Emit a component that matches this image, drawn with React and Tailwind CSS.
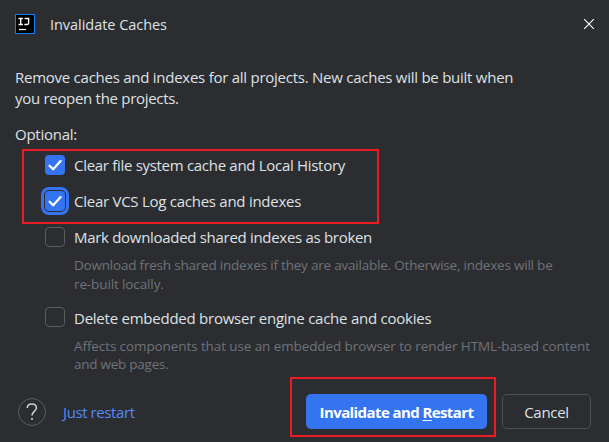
import React from "react";

function Check() {
  return (
    <svg width="20" height="20" viewBox="0 0 20 20" fill="none" className="block">
      <path d="M4.6 10.7 8.2 14.3 15.6 6.1" stroke="#fff" strokeWidth="2.3" strokeLinecap="round" strokeLinejoin="round" />
    </svg>
  );
}

function Checkbox({ checked, focused }) {
  return (
    <span
      className={
        "block size-5 shrink-0 rounded-[4px] " +
        (checked ? "bg-[#3574f0] " : "border-[1.5px] border-[#5a5d63] ") +
        (focused ? "outline-3 outline-offset-1 outline-[#3574f0]" : "")
      }
    >
      {checked && <Check />}
    </span>
  );
}

function Option({ label, spacing, checked, focused, offset = "" }) {
  return (
    <label className="flex h-5 gap-[9px]">
      <Checkbox checked={checked} focused={focused} />
      <span className={"leading-5 " + offset + " " + spacing}>{label}</span>
    </label>
  );
}

export default function App() {
  return (
    <div className="relative flex h-[442px] w-[609px] flex-col overflow-hidden bg-[#2b2d30] font-['Open_Sans','Noto_Sans',sans-serif] text-[15px] whitespace-nowrap text-[#dfe1e5]">
      <header className="flex h-12 items-center pr-[14px] pl-[15px]">
        <svg width="20" height="20" viewBox="0 0 20 20" className="block shrink-0">
          <rect x="0.5" y="0.5" width="19" height="19" fill="#000" stroke="#087cfa" />
          <path d="M3.5 4.5h4.4M5.7 4.5v6M3.5 10.5h4.4M9.6 4.5h4v4.4q0 1.6-1.6 1.6H9.3" stroke="#fff" strokeWidth="1.4" fill="none" />
          <path d="M4 15.5h7" stroke="#fff" strokeWidth="1.2" />
        </svg>
        <h1 className="ml-[15px] grow pt-px text-[14.5px] leading-5 tracking-[-0.04px]">Invalidate Caches</h1>
        <svg width="12" height="12" viewBox="0 0 12 12" className="block">
          <path d="M1.2 1.2 10.8 10.8M10.8 1.2 1.2 10.8" stroke="#fff" strokeWidth="1.1" />
        </svg>
      </header>

      <main className="px-[15px] pt-[19px]">
        <p className="leading-[21px]">
          <span className="tracking-[-0.255px]">Remove caches and indexes for all projects. New caches will be built when</span>
          <br />
          <span className="tracking-[-0.3px]">you reopen the projects.</span>
        </p>
        <p className="mt-[15px] leading-[21px] tracking-[-0.25px]">Optional:</p>
        <div className="mt-[10px] flex flex-col pl-[30px]">
          <Option label="Clear file system cache and Local History" spacing="tracking-[-0.3px]" checked />
          <div className="mt-4">
            <Option label="Clear VCS Log caches and indexes" spacing="tracking-[-0.26px]" checked focused />
          </div>
          <div className="mt-4">
            <Option label="Mark downloaded shared indexes as broken" spacing="tracking-[-0.3px]" />
          </div>
          <p className="mt-[9px] pl-[29px] text-[13.5px] leading-[19px] text-[#6f737a]">
            <span className="tracking-[-0.21px]">Download fresh shared indexes if they are available. Otherwise, indexes will be</span>
            <br />
            <span className="tracking-[-0.12px]">re-built locally.</span>
          </p>
          <div className="mt-[13px]">
            <Option label="Delete embedded browser engine cache and cookies" spacing="tracking-[-0.24px]" offset="pt-px" />
          </div>
          <p className="mt-[10px] pl-[29px] text-[13.5px] leading-[18px] text-[#6f737a]">
            <span className="tracking-[-0.1px]">Affects components that use an embedded browser to render HTML-based content</span>
            <br />
            <span className="tracking-[-0.25px]">and web pages.</span>
          </p>
        </div>
      </main>

      <footer className="mt-auto mb-[13px] flex h-[35px] items-center pr-[18px] pl-[18px]">
        <button className="grid size-7 place-items-center rounded-full border border-[#5a5d63]">
          <svg width="12" height="18" viewBox="0 0 12 18" fill="none" className="block">
            <path d="M1.3 4.9C1.3 2.5 3.2 1.1 5.8 1.1s4.6 1.5 4.6 3.8c0 3-4.4 3.6-4.4 7.6" stroke="#ced0d6" strokeWidth="1.5" />
            <circle cx="6" cy="16" r="1.1" fill="#ced0d6" />
          </svg>
        </button>
        <a className="ml-[17px] grow pt-px leading-5 tracking-[-0.4px] text-[#548af7]">Just restart</a>
        <button className="h-[35px] w-[181px] rounded-[5px] bg-[#3574f0] pt-px font-bold tracking-[-0.59px] text-white">
          <span>
            Invalidate and <span className="underline underline-offset-2">R</span>estart
          </span>
        </button>
        <button className="ml-[15px] h-[35px] w-[89px] rounded-[5px] border border-[#4e5157] pt-px tracking-[-0.3px]">Cancel</button>
      </footer>

      <div className="absolute top-[149px] left-[22px] h-[75px] w-[357px] border-2 border-[#ed1c24]" />
      <div className="absolute top-[377px] left-[290px] h-[60px] w-[206px] border-2 border-[#ed1c24]" />
    </div>
  );
}
